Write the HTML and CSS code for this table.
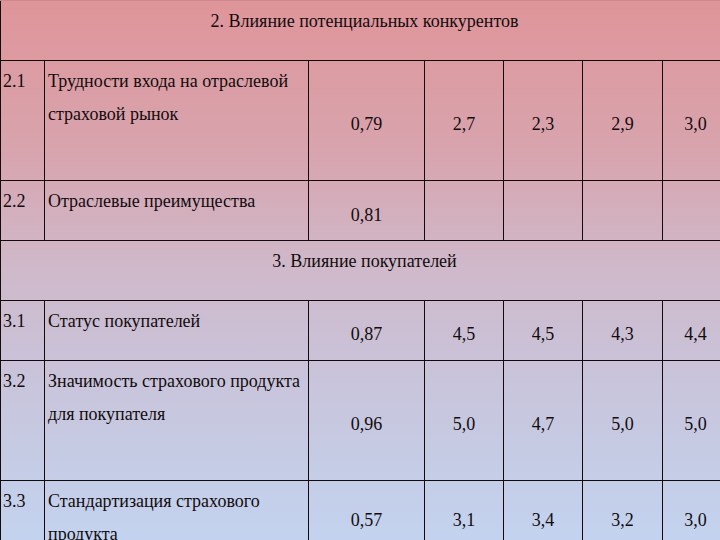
FILE: index.html
```html
<!DOCTYPE html>
<html lang="ru">
<head>
<meta charset="utf-8">
<title>Влияние конкурентов</title>
<link rel="stylesheet" href="styles.css">
</head>
<body>
<table class="grid">
  <colgroup>
    <col class="c-num"><col class="c-name"><col class="c-w"><col class="c-v"><col class="c-v"><col class="c-v2"><col class="c-last">
  </colgroup>
  <tr class="r60">
    <td class="head" colspan="7">2. Влияние потенциальных конкурентов</td>
  </tr>
  <tr class="r120">
    <td class="num">2.1</td>
    <td class="name">Трудности входа на отраслевой<br>страховой рынок</td>
    <td class="val">0,79</td>
    <td class="val">2,7</td>
    <td class="val">2,3</td>
    <td class="val">2,9</td>
    <td class="val">3,0</td>
  </tr>
  <tr class="r60">
    <td class="num">2.2</td>
    <td class="name">Отраслевые преимущества</td>
    <td class="val low">0,81</td>
    <td class="val"></td>
    <td class="val"></td>
    <td class="val"></td>
    <td class="val"></td>
  </tr>
  <tr class="r60">
    <td class="head" colspan="7">3. Влияние покупателей</td>
  </tr>
  <tr class="r60">
    <td class="num">3.1</td>
    <td class="name">Статус покупателей</td>
    <td class="val">0,87</td>
    <td class="val">4,5</td>
    <td class="val">4,5</td>
    <td class="val">4,3</td>
    <td class="val">4,4</td>
  </tr>
  <tr class="r120">
    <td class="num">3.2</td>
    <td class="name">Значимость страхового продукта<br>для покупателя</td>
    <td class="val">0,96</td>
    <td class="val">5,0</td>
    <td class="val">4,7</td>
    <td class="val">5,0</td>
    <td class="val">5,0</td>
  </tr>
  <tr class="r62">
    <td class="num">3.3</td>
    <td class="name">Стандартизация страхового<br>продукта</td>
    <td class="val">0,57</td>
    <td class="val">3,1</td>
    <td class="val">3,4</td>
    <td class="val">3,2</td>
    <td class="val">3,0</td>
  </tr>
</table>
</body>
</html>
```

FILE: styles.css
```css
html, body {
  margin: 0;
  padding: 0;
}
body {
  width: 720px;
  height: 540px;
  overflow: hidden;
  background: linear-gradient(to bottom, #df9599 0%, #d8a4ae 28%, #cfb9ca 50%, #c8c5dc 72%, #c3d3ef 100%);
  font-family: "Liberation Serif", "Times New Roman", serif;
  font-size: 18px;
  color: #120c0e;
}
.grid {
  border-collapse: collapse;
  table-layout: fixed;
  width: 729px;
}
.c-num { width: 44px; }
.c-name { width: 264px; }
.c-w { width: 116px; }
.c-v { width: 79px; }
.c-v2 { width: 80px; }
.c-last { width: 66px; }
.grid td {
  font-family: "Liberation Serif", "Times New Roman", serif;
  font-size: 18px;
  border: 1px solid #140a0c;
  padding: 0;
  line-height: 33px;
  white-space: nowrap;
}
.grid tr:first-child td { border-top-color: #c98a8e; }
.r60 { height: 60px; }
.r120 { height: 120px; }
.r62 { height: 62px; }
.grid td.head {
  text-align: center;
  vertical-align: top;
  padding-top: 4px;
}
.grid td.num {
  vertical-align: top;
  padding: 4px 0 0 2px;
}
.grid td.name {
  vertical-align: top;
  padding: 4px 0 0 3px;
}
.grid td.val {
  text-align: center;
  vertical-align: middle;
  padding-top: 8px;
}
.grid td.low {
  padding-top: 10px;
}
```
